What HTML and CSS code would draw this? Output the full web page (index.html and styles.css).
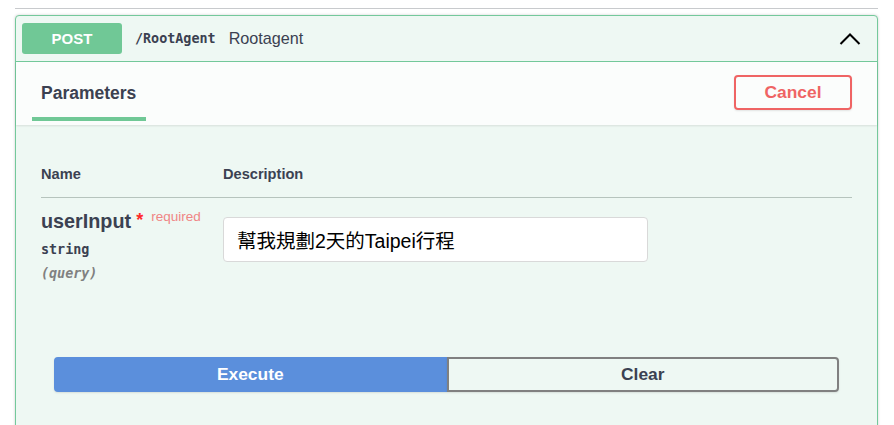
FILE: index.html
```html
<!DOCTYPE html>
<html lang="zh-Hant">
<head>
<meta charset="utf-8">
<title>Swagger - RootAgent</title>
<link rel="stylesheet" href="styles.css">
</head>
<body>
<div class="page">
  <div class="rule"></div>
  <div class="opblock">
    <div class="summary">
      <span class="method">POST</span>
      <span class="path">/RootAgent</span>
      <span class="summary-desc">Rootagent</span>
      <svg class="chevron" width="22" height="14" viewBox="0 0 22 14" aria-hidden="true">
        <polyline points="1.5,12 11,2.5 20.5,12" fill="none" stroke="#000" stroke-width="2"/>
      </svg>
    </div>
    <div class="tab-header">
      <div class="tab">
        <h4 class="tab-title">Parameters</h4>
        <div class="tab-bar"></div>
      </div>
      <button class="btn-cancel">Cancel</button>
    </div>
    <div class="params">
      <div class="params-head">
        <div class="col-name">Name</div>
        <div class="col-desc">Description</div>
      </div>
      <div class="param-row">
        <div class="col-name">
          <div class="param-name">userInput<span class="star">*</span><span class="req">required</span></div>
          <div class="param-type">string</div>
          <div class="param-in">(query)</div>
        </div>
        <div class="col-desc">
          <input class="param-input" type="text" value="幫我規劃2天的Taipei行程">
        </div>
      </div>
    </div>
    <div class="execute-wrapper">
      <button class="btn-execute">Execute</button>
      <button class="btn-clear">Clear</button>
    </div>
  </div>
</div>
</body>
</html>
```

FILE: styles.css
```css
* { box-sizing: border-box; }

body {
  margin: 0;
  background: #fff;
  font-family: "Liberation Sans", Arial, sans-serif;
  color: #3b4151;
  overflow: hidden;
}

.page {
  padding: 8px 16px 0 15px;
}

.rule {
  border-top: 1px solid #c8cacd;
  margin-bottom: 6px;
}

.opblock {
  border: 1px solid #74c99b;
  border-radius: 4px;
  background: #eef8f3;
  box-shadow: 0 0 3px rgba(0, 0, 0, 0.19);
  min-height: 480px;
}

.summary {
  display: flex;
  align-items: center;
  padding: 7px 16px 7px 6px;
  border-bottom: 1px solid #74c99b;
}

.method {
  width: 100px;
  height: 31px;
  border-radius: 3px;
  background: #70c896;
  color: #fff;
  font-weight: 700;
  font-size: 15px;
  display: flex;
  align-items: center;
  justify-content: center;
}

.path {
  margin-left: 13px;
  font-family: "DejaVu Sans Mono", "Liberation Mono", monospace;
  font-weight: 700;
  font-size: 13.4px;
  color: #3b4151;
}

.summary-desc {
  margin-left: 13px;
  font-size: 16.2px;
  color: #3b4151;
}

.chevron {
  margin-left: auto;
  display: block;
}

.tab-header {
  height: 63px;
  display: flex;
  justify-content: space-between;
  align-items: flex-start;
  padding: 0 25px 0 16px;
  background: #fbfdfc;
  box-shadow: 0 1px 2px rgba(0, 0, 0, 0.1);
}

.tab {
  padding-top: 20px;
}

.tab-title {
  margin: 0;
  padding: 0 10px 0 9px;
  font-size: 17.5px;
  line-height: 22px;
  font-weight: 700;
  color: #3b4151;
}

.tab-bar {
  margin-top: 13px;
  height: 4px;
  background: #70c896;
}

.btn-cancel {
  margin-top: 13px;
  width: 118px;
  height: 35px;
  border: 2px solid #ef6464;
  border-radius: 4px;
  background: transparent;
  color: #ef6464;
  font-family: "Liberation Sans", Arial, sans-serif;
  font-weight: 700;
  font-size: 17.4px;
  line-height: 31px;
  padding: 0;
  box-shadow: 0 1px 2px rgba(0, 0, 0, 0.1);
}

.params {
  padding: 40px 25px 0 25px;
}

.params-head {
  display: flex;
  font-weight: 700;
  font-size: 14.6px;
  line-height: 18px;
  padding-bottom: 14px;
  border-bottom: 1px solid #b6c4bd;
}

.col-name {
  width: 182px;
  flex: none;
}

.col-desc {
  flex: 1;
}

.param-row {
  display: flex;
}

.param-row .col-name {
  padding-top: 7px;
}

.param-name {
  font-weight: 700;
  font-size: 19.8px;
  line-height: 24px;
  color: #3b4151;
  white-space: nowrap;
}

.star {
  color: #ff2a2a;
  font-size: 18px;
  padding: 0 8px 0 5px;
  vertical-align: 2px;
}

.req {
  color: #f08585;
  font-weight: 400;
  font-size: 13.5px;
  vertical-align: 7px;
}

.param-type {
  margin-top: 8px;
  font-family: "DejaVu Sans Mono", "Liberation Mono", monospace;
  font-weight: 700;
  font-size: 13.4px;
  line-height: 18px;
  color: #3b4151;
}

.param-in {
  margin-top: 6px;
  font-family: "DejaVu Sans Mono", "Liberation Mono", monospace;
  font-style: italic;
  font-weight: 700;
  font-size: 13.4px;
  line-height: 18px;
  color: #808080;
}

.param-row .col-desc {
  padding-top: 19px;
}

.param-input {
  display: block;
  width: 425px;
  height: 45px;
  padding: 0 13px;
  border: 1px solid #d9d9d9;
  border-radius: 4px;
  background: #fff;
  font-family: "Liberation Sans", "Noto Sans CJK TC", sans-serif;
  font-size: 19.5px;
  color: #000;
  outline: none;
}

.execute-wrapper {
  display: flex;
  padding: 0 38px;
  margin-top: 74px;
}

.btn-execute,
.btn-clear {
  flex: 1;
  height: 35px;
  font-family: "Liberation Sans", Arial, sans-serif;
  font-weight: 700;
  font-size: 17.4px;
  padding: 0;
  box-shadow: 0 1px 2px rgba(0, 0, 0, 0.1);
}

.btn-execute {
  background: #5b8fdc;
  border: 2px solid #5b8fdc;
  color: #fff;
  border-radius: 4px 0 0 4px;
}

.btn-clear {
  background: transparent;
  border: 2px solid #808080;
  color: #3b4151;
  border-radius: 0 4px 4px 0;
}
```
